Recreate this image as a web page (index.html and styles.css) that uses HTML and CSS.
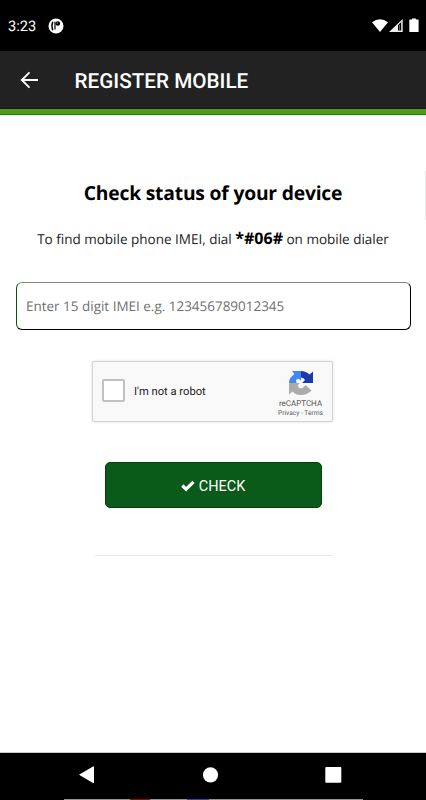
FILE: index.html
```html
<!DOCTYPE html>
<html lang="en">
<head>
<meta charset="utf-8">
<title>Register Mobile</title>
<link rel="stylesheet" href="styles.css">
</head>
<body>
<div class="status">
  <span class="time">3:23</span>
  <svg class="notif" width="16" height="16" viewBox="0 0 16 16"><circle cx="8" cy="8" r="7.500" fill="#fff"/><path d="M4.800 3.700Q3 8 4.800 12.300" stroke="#000" stroke-width="1.400" fill="none"/><path d="M7 3.800V11.500" stroke="#000" stroke-width="1.200"/><circle cx="9.800" cy="5.500" r="2.300" fill="#000"/><circle cx="9.300" cy="5" r=".6" fill="#fff"/></svg>
  <svg class="signals" width="48" height="16" viewBox="0 0 48 16"><path d="M0 4.300Q8 -1.800 16 4.300L8 14Z" fill="#fff"/><path d="M17 14L30.700 1V14Z" fill="#eee"/><path d="M26 7.200L29.200 4V12.500H26Z" fill="#000"/><path d="M27.500 7v5" stroke="#666"/><path d="M38 1.500h2V.5h4v1h2q.6 0 .6.600v11.300q0 .6-.6.600h-8q-.7 0-.7-.6V2.100q0-.6.700-.6Z" fill="#fff"/></svg>
</div>
<header class="bar">
  <svg width="18" height="18" viewBox="0 0 18 18"><path d="M18 9H1.800M9.500 1.300L1.800 9L9.500 16.700" fill="none" stroke="#fff" stroke-width="1.800"/></svg>
  <h1>REGISTER MOBILE</h1>
</header>
<main>
  <i class="edge"></i>
  <h2>Check status of your device</h2>
  <p class="hint">To find mobile phone IMEI, dial <b>*#06#</b> on mobile dialer</p>
  <input class="imei" type="text" placeholder="Enter 15 digit IMEI e.g. 123456789012345">
  <div class="captcha">
    <span class="box"></span>
    <span class="robot">I'm not a robot</span>
    <div class="brand">
      <svg width="26" height="26" viewBox="0 0 26 26">
        <path d="M13 1H4L6.500 4Q1 7.500 1 13H8.500L8 10.500Q9 8 11 9L13 10.500Z" fill="#4285f4"/>
        <path d="M13 1Q18 1 21.500 4.500L25 1.500V13H14L17 10Q16 7.500 13 7.500Z" fill="#1c3aa9"/>
        <path d="M1 13H12L9.500 15.500Q11 19 14.500 18L17.500 15L23.500 20.500Q19 25 13 25Q7.500 25 4.500 21.500L1 24.500Z" fill="#ababab"/>
      </svg>
      <span class="name">reCAPTCHA</span>
      <span class="links">Privacy - Terms</span>
    </div>
  </div>
  <button class="check"><svg width="14" height="12" viewBox="0 0 14 12"><path d="M1.300 5.500L5.100 9.200L12.500 1.900" fill="none" stroke="#fff" stroke-width="3.200"/></svg><span>CHECK</span></button>
  <hr>
</main>
<nav>
  <svg width="426" height="47" viewBox="0 0 426 47"><path d="M79 21.800L93 13.500Q94 13 94 14V29.500Q94 30.500 93 30Z" fill="#fff"/><circle cx="210.500" cy="21.800" r="7.600" fill="#fff"/><rect x="325.300" y="14" width="16" height="15.800" rx="1" fill="#fff"/><path d="M64 46.500H363" stroke="#929292"/><path d="M130 46.500H150" stroke="#a00"/><path d="M187 46.500H209" stroke="#1650b0"/></svg>
</nav>
</body>
</html>
```
FILE: styles.css
```css
* { box-sizing: border-box; }
body { margin: 0; height: 800px; display: flex; flex-direction: column; background: #fff; color: #000; font-family: "Open Sans", sans-serif; overflow: hidden; text-rendering: geometricPrecision; }
svg { display: block; flex: none; }
.status { height: 51px; flex: none; display: flex; align-items: center; background: #000; color: #fff; padding: 0 8px; font: 14.600px Roboto, sans-serif; }
.time { width: 40px; }
.signals { margin-left: auto; margin-right: -2px; margin-top: 1px; }
.bar { height: 64px; flex: none; display: flex; align-items: center; background: #222; border-bottom: 6px solid #53991f; box-shadow: inset 0 -1px #1a1a1a; padding-left: 20px; position: relative; }
.bar::after { content: ""; position: absolute; left: 0; right: 0; bottom: -6px; height: 1px; background: #009000; }
h1 { margin: 3px 0 0 36.500px; color: #fff; font: 500 20.700px/24px Roboto, sans-serif; white-space: nowrap; }
main { height: 638px; flex: none; display: flex; flex-direction: column; align-items: center; position: relative; }
.edge { position: absolute; right: 0; top: 56px; width: 1px; height: 49px; background: #e8ebee; }
h2 { margin: 64px 0 0; font-size: 19.300px; line-height: 28px; font-weight: 700; letter-spacing: -.2px; white-space: nowrap; }
.hint { margin: 18px 0 0; height: 28px; line-height: 28px; font-size: 13.500px; font-weight: 400; color: #222; white-space: nowrap; }
.hint b { font-size: 16px; font-weight: 700; line-height: 20px; color: #000; }
.imei { width: 395px; height: 48px; margin: 29px 0 0 1px; padding: 0 9px; border: 1px solid #000; border-top-color: #7b8a7b; border-left-color: #07500f; border-radius: 6px; background: #fff; font: 400 13.470px "Open Sans", sans-serif; text-rendering: geometricPrecision; }
.imei::placeholder { color: #707070; opacity: 1; }
.captcha { width: 241px; height: 61px; margin: 31px 1px 0 0; display: flex; align-items: center; padding-left: 9px; border: 1px solid #d3d3d3; border-radius: 2px; background: #f9f9f9; box-shadow: 0 0 3px #ddd; font-family: Roboto, sans-serif; position: relative; }
.box { width: 23px; height: 23px; border: 2px solid #c1c1c1; border-radius: 2px; background: #fff; margin-top: -2px; }
.robot { margin-left: 9px; font-size: 11.200px; color: #222; }
.brand { margin-left: auto; width: 63px; display: flex; flex-direction: column; align-items: center; margin-top: 3px; }
.name { font-size: 8px; line-height: 10px; margin-top: 3px; color: #555; }
.links { font-size: 6.600px; line-height: 8px; color: #555; }
.check { width: 217px; height: 46px; margin: 40px 0 0; display: flex; align-items: center; justify-content: center; gap: 4px; border: 1px solid #063f0c; border-radius: 5px; background: #0a5a19; color: #fff; font: 14.500px Roboto, sans-serif; padding: 2px 0 0; }
hr { width: 237px; margin: 47px 0 0; border: 0; border-top: 1px solid #e8e8e8; }
nav { height: 47px; flex: none; background: #000; box-shadow: 0 -1px #ccc; position: relative; }
```
